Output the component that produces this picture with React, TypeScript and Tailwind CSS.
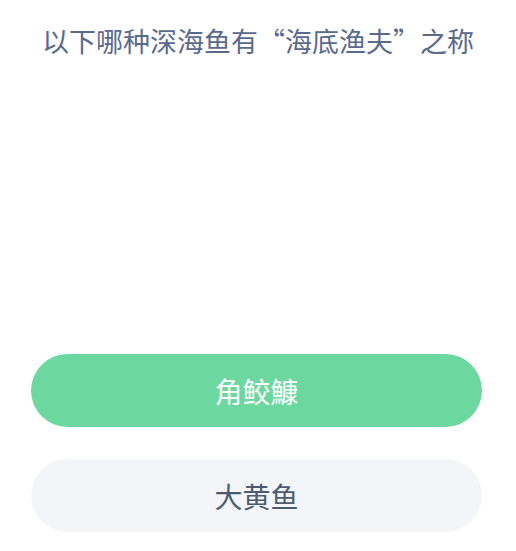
import React from "react";

export default function App() {
  const font = { fontFamily: '"Noto Sans CJK SC", "Noto Sans", sans-serif' };
  return (
    <div className="w-[516px] h-[551px] bg-white flex flex-col" style={font}>
      <div className="pt-[21px] h-[354px] text-center text-[27px] leading-[40px] text-[#5a6a8c]">
        以下哪种深海鱼有“海底渔夫”之称
      </div>
      <div className="flex flex-col gap-[32px] pl-[31px] pr-[34px]">
        <button className="h-[73px] w-full rounded-full bg-[#6cd89f] text-white text-[28px] leading-[40px] flex items-center justify-center">
          角鲛鱇
        </button>
        <button className="h-[73px] w-full rounded-full bg-[#f3f5f8] text-[#4d5b70] text-[28px] leading-[40px] flex items-center justify-center">
          大黄鱼
        </button>
      </div>
    </div>
  );
}
